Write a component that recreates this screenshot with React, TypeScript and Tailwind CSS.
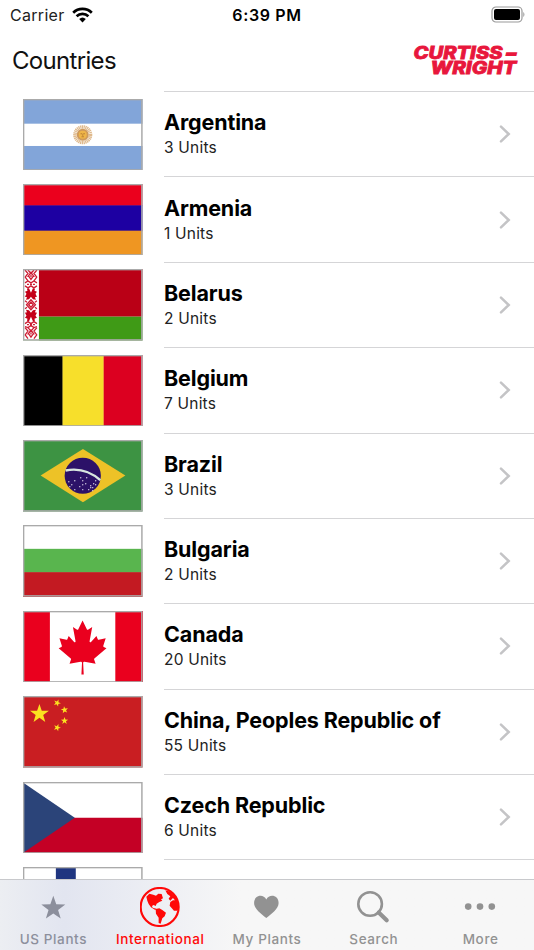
import React from 'react'

interface Country {
  name: string
  units: number
  flag: React.ReactNode
}

const STAR = 'M0 -10L2.35 -3.24L9.51 -3.09L3.8 1.24L5.88 8.09L0 4L-5.88 8.09L-3.8 1.24L-9.51 -3.09L-2.35 -3.24Z'

const brazilStars = [
  [46, 42], [49, 45], [52, 41], [47, 47], [52, 50], [58, 38], [60, 41], [63, 44], [60, 45], [57, 47],
  [64, 38], [68, 46], [70, 48], [71, 44], [73, 45], [70, 51], [66, 50], [60, 50], [73, 41], [68, 48],
]

function Stripes({ bands }: { bands: [number, number, string][] }) {
  return (
    <>
      {bands.map(([y, height, fill]) => (
        <rect key={y} y={y} width="120" height={height} fill={fill} />
      ))}
    </>
  )
}

function Argentina() {
  return (
    <>
      <Stripes bands={[[0, 25, '#82a5d9'], [25, 22.3, '#fff'], [47.3, 25, '#82a5d9']]} />
      <circle cx="60" cy="36" r="7.8" fill="none" stroke="#dfb98c" strokeWidth="3.6" strokeDasharray="1.2 0.5" />
      <circle cx="60" cy="36" r="6" fill="#cf9a5c" />
      <circle cx="60" cy="36" r="4" fill="#efb548" />
      <path d="M57.8 35h1.7M60.5 35h1.7M60 35.5v1.6M58.8 38h2.4" stroke="#a46b2c" strokeWidth="0.7" />
    </>
  )
}

function Belarus() {
  return (
    <>
      <Stripes bands={[[0, 48, '#ba0016'], [48, 24, '#3f9a16']]} />
      <rect width="16" height="72" fill="#fff" />
      <g stroke="#cc1c33" strokeWidth="1.3" fill="none">
        {[0, 58].map(y => (
          <path
            key={y}
            transform={`translate(0 ${y})`}
            d="M2 1l3 3.5-3 4M5 1l3 3.5 3-3.5M14 1l-3 3.5 3 4M8 3.5L5.5 7 8 10.5 10.5 7zM2 8l3 4M14 8l-3 4M5 7v1M11 7v1M8 6v2"
          />
        ))}
        <path d="M2 14l3-2 3 2 3-2 3 2M2 17l3 2 3-2 3 2 3-2M4 15.5h2M10 15.5h2M7 15.5h2" />
        <path d="M2 55l3-2 3 2 3-2 3 2M2 58l3 1 3-2 3 2 3-1M4 56h2M10 56h2M7 56h2" />
        <path d="M8 31l4.5 5-4.5 5-4.5-5zM8 33.5l2.3 2.5L8 38.5 5.7 36zM2 32l2 1.5M14 32l-2 1.5M2 40l2-1.5M14 40l-2-1.5" />
      </g>
      <g fill="#c40018">
        <path d="M8 24L10 19.5L12 20L11.5 22L14 23L12.5 25L14 28L12 28.5L13 31L10 30.5L8 28L6 30.5L3 31L4 28.5L2 28L3.5 25L2 23L4.5 22L4 20L6 19.5Z" />
        <path d="M8 48L10 52.5L12 52L11.5 50L14 49L12.5 47L14 44L12 43.5L13 41L10 41.5L8 44L6 41.5L3 41L4 43.5L2 44L3.5 47L2 49L4.5 50L4 52L6 52.5Z" />
      </g>
    </>
  )
}

function Belgium() {
  return (
    <>
      <rect width="40" height="72" fill="#000" />
      <rect x="39.7" width="41.5" height="72" fill="#f7df2b" />
      <rect x="81" width="39" height="72" fill="#dc0020" />
    </>
  )
}

function Brazil() {
  return (
    <>
      <rect width="120" height="72" fill="#3d9343" />
      <path d="M60.2 9L102.8 35.7L60.2 62.7L17.7 35.7Z" fill="#edc227" />
      <circle cx="60" cy="36" r="18.2" fill="#2c1168" />
      <path d="M42.8 30.7C54 28.5 67 31 77.6 40.5" fill="none" stroke="#d7e5df" strokeWidth="2.4" />
      {brazilStars.map(([x, y], i) => (
        <circle key={i} cx={x} cy={y} r="0.7" fill="#d9d3e8" />
      ))}
    </>
  )
}

function Canada() {
  return (
    <>
      <rect width="120" height="72" fill="#fff" />
      <rect width="27" height="72" fill="#ea001e" />
      <rect x="92.7" width="28" height="72" fill="#ea001e" />
      <path
        transform="translate(-2.1 4.2) scale(0.0129 0.0135)"
        d="m4890 4430-45-863a95 95 0 0 1 111-98l859 151-116-320a65 65 0 0 1 20-73l941-762-212-99a65 65 0 0 1-34-79l186-572-542 115a65 65 0 0 1-73-38l-105-247-423 454a65 65 0 0 1-111-57l204-1052-327 189a65 65 0 0 1-91-27l-332-652-332 652a65 65 0 0 1-91 27l-327-189 204 1052a65 65 0 0 1-111 57l-423-454-105 247a65 65 0 0 1-73 38l-542-115 186 572a65 65 0 0 1-34 79l-212 99 941 762a65 65 0 0 1 20 73l-116 320 859-151a95 95 0 0 1 111 98l-45 863z"
        fill="#ea001e"
      />
    </>
  )
}

function China() {
  return (
    <>
      <rect width="120" height="72" fill="#c91e22" />
      <path transform="translate(16.5 18)" d={STAR} fill="#fbe120" />
      <path transform="translate(34.3 7) rotate(22) scale(0.38)" d={STAR} fill="#fbe120" />
      <path transform="translate(41.7 14) rotate(-8) scale(0.38)" d={STAR} fill="#fbe120" />
      <path transform="translate(41.7 25) scale(0.38)" d={STAR} fill="#fbe120" />
      <path transform="translate(34.3 31.8) rotate(20) scale(0.38)" d={STAR} fill="#fbe120" />
    </>
  )
}

function Czechia() {
  return (
    <>
      <Stripes bands={[[0, 36, '#fff'], [36, 36, '#c40025']]} />
      <path d="M0 0.5L52 36L0 71.5Z" fill="#2b4479" />
    </>
  )
}

function Finland() {
  return (
    <>
      <rect width="120" height="72" fill="#fff" />
      <rect x="33" width="20" height="72" fill="#1f3580" />
    </>
  )
}

const countries: Country[] = [
  { name: 'Argentina', units: 3, flag: <Argentina /> },
  { name: 'Armenia', units: 1, flag: <Stripes bands={[[0, 22, '#eb001d'], [21.5, 26, '#1d00a2'], [47, 25, '#ef9622']]} /> },
  { name: 'Belarus', units: 2, flag: <Belarus /> },
  { name: 'Belgium', units: 7, flag: <Belgium /> },
  { name: 'Brazil', units: 3, flag: <Brazil /> },
  { name: 'Bulgaria', units: 2, flag: <Stripes bands={[[0, 24, '#fff'], [24, 24, '#59b54e'], [47.5, 25, '#c31a22']]} /> },
  { name: 'Canada', units: 20, flag: <Canada /> },
  { name: 'China, Peoples Republic of', units: 55, flag: <China /> },
  { name: 'Czech Republic', units: 6, flag: <Czechia /> },
]

function StatusBar() {
  return (
    <div className="grid h-[30px] shrink-0 grid-cols-3 items-center px-[9px] text-[16px] leading-none">
      <div className="flex items-center gap-[7px] pl-px">
        <span className="tracking-[0.3px] text-[#222]">Carrier</span>
        <svg className="h-[16px] w-[21px]" viewBox="0 0 21 16">
          <g fill="none" stroke="#000" strokeWidth="2.7">
            <path d="M1.2 5.7A13.3 13.3 0 0 1 19.8 5.7" />
            <path d="M4.6 9.2A8.5 8.5 0 0 1 16.4 9.2" />
          </g>
          <path d="M10.5 15.5L7.2 12A4.8 4.8 0 0 1 13.8 12Z" />
        </svg>
      </div>
      <span className="text-center font-semibold tracking-[0.65px] whitespace-nowrap">6:39 PM</span>
      <svg className="h-[18px] w-[35px] justify-self-end" viewBox="0 0 35 18">
        <rect x="2" y="1" width="30" height="15" rx="4" fill="none" stroke="#999" strokeWidth="1.2" />
        <rect x="4" y="3" width="26" height="11" rx="2" />
        <path d="M33.3 6c1.5.8 1.5 4.2 0 5z" fill="#999" />
      </svg>
    </div>
  )
}

function Logo() {
  return (
    <svg className="h-[34px] w-[108px]" viewBox="0 0 108 34" fill="#e8173c" stroke="#e8173c" strokeWidth="0.8">
      <g fontFamily="Inter, sans-serif" fontSize="16.8" fontWeight="800" fontStyle="italic">
        <text x="1.5" y="15.2" textLength="89" lengthAdjust="spacingAndGlyphs">CURTISS</text>
        <text x="93" y="14.5" strokeWidth="1.4" textLength="12.5" lengthAdjust="spacingAndGlyphs">-</text>
        <text x="18.5" y="30.4" textLength="86" lengthAdjust="spacingAndGlyphs">WRIGHT</text>
      </g>
    </svg>
  )
}

function FlagFrame({ children }: { children: React.ReactNode }) {
  return (
    <svg className="h-[71.5px] w-[119.5px]" viewBox="0 0 120 72" preserveAspectRatio="none">
      {children}
      <rect x="0.6" y="0.6" width="118.8" height="70.8" fill="none" stroke="#aaa" strokeWidth="1.5" />
    </svg>
  )
}

function CountryRow({ country }: { country: Country }) {
  return (
    <div className="flex h-[85.38px] shrink-0 pl-[23px]">
      <div className="w-[141px] shrink-0 pt-[7.5px]">
        <FlagFrame>{country.flag}</FlagFrame>
      </div>
      <div className="flex flex-1 items-center justify-between border-t border-[#d5d5d7] pr-[23.5px]">
        <div className="-mt-px">
          <div className="text-[21.5px] leading-[27px] font-bold tracking-[-0.13px]">{country.name}</div>
          <div className="mt-[2px] text-[15.5px] leading-[20px] tracking-[0.2px] text-[#222]">{country.units} Units</div>
        </div>
        <svg className="h-[18px] w-[12px]" viewBox="0 0 12 18" fill="none" stroke="#c4c4c6" strokeWidth="2.5">
          <path d="M2 1.7L9.7 9L2 16.3" strokeLinecap="round" />
        </svg>
      </div>
    </div>
  )
}

const tabs = [
  {
    label: 'US Plants',
    color: 'text-[#8c8f9c]',
    icon: <path transform="translate(20.3 21.4) scale(1.26)" d={STAR} fill="currentColor" />,
  },
  {
    label: 'International',
    color: 'text-[#ff0808]',
    icon: (
      <g transform="scale(0.333)" fill="currentColor">
        <circle cx="59" cy="60" r="57" fill="none" stroke="currentColor" strokeWidth="6.5" />
        <path d="M19 29L28 20L40 23L48 26L55 20L65 21L69 34L63 37L67 41L58 45L50 50L47 57L41 54L36 57L38 62L49 65L46 69L33 61L26 51L22 41Z" />
        <path d="M47 66L58 64L67 69L78 77L74 88L67 94L62 110L56 108L56 92L48 80Z" />
        <path d="M76 10L91 14L105 28L113 43L117 63L112 71L102 71L95 63L89 56L91 45L99 40L105 40L99 33L91 41L86 35L91 28L82 21Z" />
      </g>
    ),
  },
  {
    label: 'My Plants',
    color: 'text-[#929292]',
    icon: <path d="M19.3 31C14.3 27 7.1 22 7.1 16C7.1 8 16.3 6.5 19.3 12.5C22.3 6.5 31.6 8 31.6 16C31.6 22 24.3 27 19.3 31Z" fill="currentColor" />,
  },
  {
    label: 'Search',
    color: 'text-[#929292]',
    icon: (
      <g fill="none" stroke="currentColor" strokeLinecap="round">
        <circle cx="16.1" cy="17" r="11.8" strokeWidth="2.6" />
        <path d="M24.7 25.5L32.7 33.3" strokeWidth="4.2" />
      </g>
    ),
  },
  {
    label: 'More',
    color: 'text-[#929292]',
    icon: (
      <g fill="currentColor">
        <circle cx="7.2" cy="19.6" r="3.3" />
        <circle cx="19" cy="19.6" r="3.3" />
        <circle cx="30.8" cy="19.6" r="3.3" />
      </g>
    ),
  },
]

export default function App() {
  return (
    <div className="flex h-[950px] w-[534px] flex-col overflow-hidden bg-white font-['Inter',sans-serif] text-black">
      <StatusBar />
      <header className="flex h-[61px] shrink-0 items-center justify-between pr-[14px] pl-[12px]">
        <h1 className="text-[24px] tracking-[-0.68px] text-[#111]">Countries</h1>
        <Logo />
      </header>
      <main className="flex min-h-0 flex-1 flex-col overflow-hidden">
        {countries.map(country => (
          <CountryRow key={country.name} country={country} />
        ))}
        {/* next row peeks out above the tab bar */}
        <div className="flex shrink-0 pl-[23px]">
          <div className="w-[141px] pt-[7.5px]">
            <FlagFrame>
              <Finland />
            </FlagFrame>
          </div>
          <div className="flex-1 border-t border-[#d5d5d7]" />
        </div>
      </main>
      <nav className="grid h-[71px] shrink-0 grid-cols-5 border-t border-[#c8c9cc] bg-[#f7f7f7] bg-linear-to-r from-[#eceef2] from-0% via-[#e2e5f0] via-12% to-[#f7f7f7] to-45%">
        {tabs.map(tab => (
          <div key={tab.label} className={`flex flex-col items-center pt-[7px] ${tab.color}`}>
            <svg className="h-[40px] w-[40px]" viewBox="0 0 40 40">
              {tab.icon}
            </svg>
            <span className="mt-[3px] text-[13.5px] leading-[18px] font-medium tracking-[0.6px] whitespace-nowrap">{tab.label}</span>
          </div>
        ))}
      </nav>
    </div>
  )
}
